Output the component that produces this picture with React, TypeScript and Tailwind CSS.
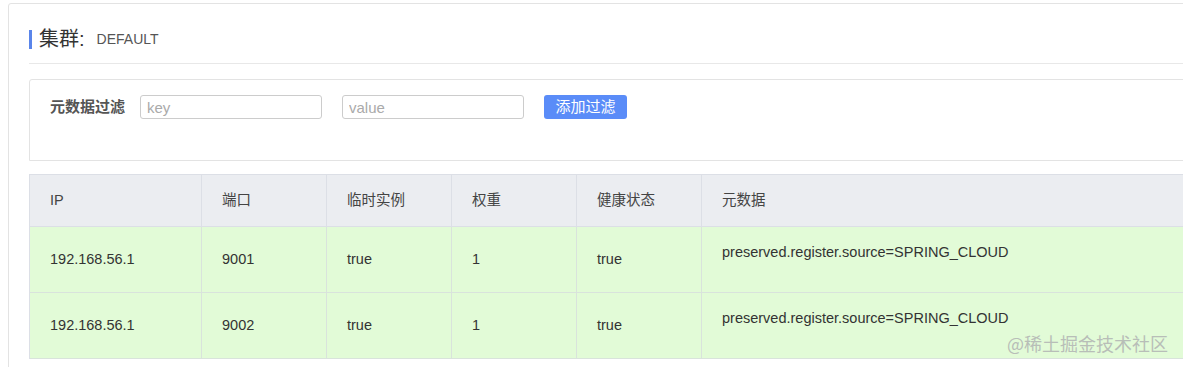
const font = { fontFamily: '"Liberation Sans", "Noto Sans CJK SC", sans-serif' };

const cols = ["IP", "端口", "临时实例", "权重", "健康状态", "元数据"];
const widths = ["w-[172px]", "w-[125px]", "w-[125px]", "w-[125px]", "w-[125px]", "flex-1"];

const rows = [
  ["192.168.56.1", "9001", "true", "1", "true", "preserved.register.source=SPRING_CLOUD"],
  ["192.168.56.1", "9002", "true", "1", "true", "preserved.register.source=SPRING_CLOUD"],
];

export default function App() {
  return (
    <div className="relative h-[367px] w-[1183px] overflow-hidden bg-white pl-2 pt-[3px]" style={font}>
      <div className="w-[1220px] h-[400px] rounded-tl-[3px] border border-[#e3e3e3] pl-5">
        {/* title */}
        <div className="flex h-[60px] items-start border-b border-[#e8e8e8] pt-[25px]">
          <div className="flex items-center">
            <span className="mr-[7px] h-[19px] w-[3px] bg-[#5a85ea]" />
            <span className="text-[20px] leading-[20px] text-[#333]">集群:</span>
            <span className="ml-[12px] text-[14px] leading-[20px] text-[#555]">DEFAULT</span>
          </div>
        </div>

        {/* filter */}
        <div className="mt-[15px] h-[82px] rounded-tl-[3px] border border-[#e3e3e3] pl-5 pt-[15px]">
          <div className="flex items-center">
            <span className="w-[90px] text-[15px] font-bold text-[#555]">元数据过滤</span>
            <input
              placeholder="key"
              className="h-[24px] w-[182px] rounded-[3px] border border-[#ccc] px-[6px] text-[15px] text-[#555] placeholder:text-[#aaa] outline-none"
            />
            <input
              placeholder="value"
              className="ml-[20px] h-[24px] w-[182px] rounded-[3px] border border-[#ccc] px-[6px] text-[15px] text-[#555] placeholder:text-[#aaa] outline-none"
            />
            <button className="ml-[20px] h-[24px] w-[83px] rounded-[3px] bg-[#5a8cf8] text-[15px] text-white">
              添加过滤
            </button>
          </div>
        </div>

        {/* table */}
        <div className="mt-[13px] border-l border-t border-[#dcdfe6] text-[14.5px] text-[#333]">
          <div className="flex h-[52px] bg-[#ebedf1]">
            {cols.map((c, i) => (
              <div key={c} className={`${widths[i]} flex items-center border-b border-r border-[#dcdfe6] pl-[20px] text-[#444]`}>
                {c}
              </div>
            ))}
          </div>
          {rows.map((r, ri) => (
            <div key={ri} className="flex h-[66px] bg-[#e2fbd7]">
              {r.map((v, i) => (
                <div
                  key={i}
                  className={`${widths[i]} flex border-b border-r border-[#d9e3dc] pl-[20px] ${i === 5 ? "items-start pt-[15px]" : "items-center"}`}
                >
                  {v}
                </div>
              ))}
            </div>
          ))}
        </div>
      </div>

      <div
        className="absolute left-[1007px] top-[330px] text-[18px] text-[#b8beb8]"
        style={{ fontFamily: '"Noto Sans CJK SC", sans-serif' }}
      >
        @稀土掘金技术社区
      </div>
    </div>
  );
}
